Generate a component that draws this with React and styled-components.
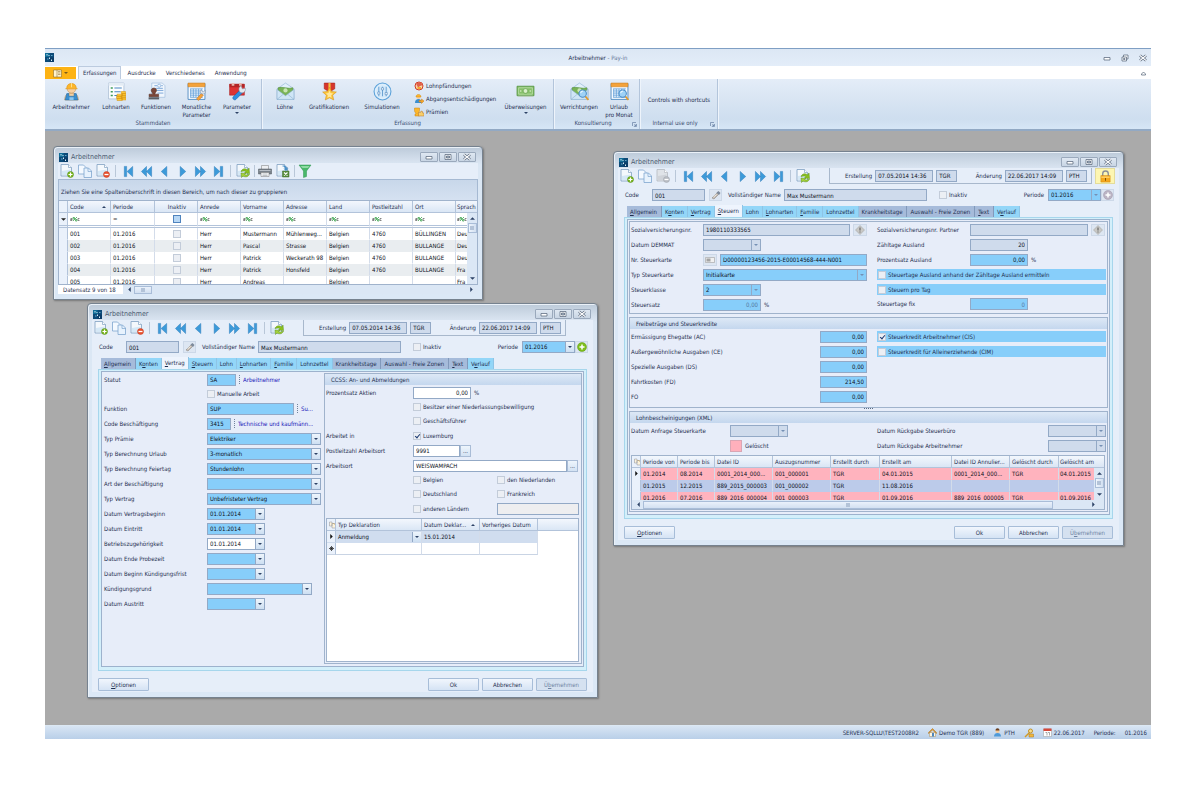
import React, { useId } from "react";
import styled, { createGlobalStyle, css } from "styled-components";

const GlobalStyle = createGlobalStyle`
  * {
    box-sizing: border-box;
  }
  body {
    margin: 0;
    background: #fff;
    color: #1f2f50;
    font: 6px/10px "DejaVu Sans Condensed", "DejaVu Sans", Tahoma, sans-serif;
  }
  button, input, select {
    font: inherit;
    color: inherit;
    margin: 0;
    padding: 0;
  }
  svg {
    display: block;
    flex: none;
  }
`;

// ---------- shell ----------
const Page = styled.div`
  min-height: 100vh;
  padding: 48px 49px 48px 45px;
  display: flex;
`;

const Shell = styled.div`
  flex: 1;
  min-width: 0;
  display: flex;
  flex-direction: column;
  border-top: 1px solid #7f9fc4;
`;

const AppTitle = styled.header`
  display: grid;
  grid-template-columns: 1fr auto 1fr;
  align-items: center;
  height: 17px;
  background: linear-gradient(#dce7f4, #e3edf9);
  span {
    color: #66789a;
  }
`;

const AppTitleButtons = styled.div`
  display: flex;
  justify-content: flex-end;
  gap: 10px;
  padding-right: 4px;
`;

const PlainButton = styled.button`
  border: none;
  background: none;
  display: flex;
  align-items: center;
  justify-content: center;
`;

const RibbonTabs = styled.nav`
  display: flex;
  height: 13px;
  background: #fff;
  align-items: flex-end;
`;

const FileButton = styled(PlainButton)`
  width: 31px;
  height: 12px;
  margin-right: 2px;
  gap: 2px;
  background: #fdb314;
`;

const RibbonTab = styled(PlainButton)`
  height: 12px;
  padding: 0 5px;
  ${(p) =>
    p.$active &&
    css`
      height: 13px;
      padding: 0 4px;
      margin-right: 1px;
      border: 1px solid #bccbdf;
      border-bottom: none;
      background: #e9f0fa;
    `}
`;

const Spacer = styled.span`
  flex: 1;
`;

const RibbonBar = styled.div`
  display: flex;
  height: 52px;
  border-bottom: 2px solid #92a9c4;
  background: linear-gradient(#e4edf8, #d9e5f3 40%, #cedeef 80%, #d6e6f6);
`;

const RibbonGroup = styled.section`
  width: ${(p) => p.$width}px;
  display: flex;
  flex-direction: column;
  border-right: 1px solid #b3c5db;
  box-shadow: 1px 0 0 #eef4fb;
`;

const RibbonItems = styled.div`
  display: flex;
  flex: 1;
  min-height: 0;
  padding: 3px 0 0 1px;
`;

const RibbonCaption = styled.div`
  height: 10px;
  display: flex;
  justify-content: center;
  align-items: center;
  margin-bottom: 1px;
  color: #3a4c70;
  svg {
    margin: 2px 2px 0 auto;
  }
  span {
    margin-left: auto;
  }
`;

const BigButton = styled(PlainButton)`
  width: ${(p) => p.$width}px;
  flex-direction: column;
  justify-content: flex-start;
  line-height: 8px;
  white-space: pre;
  text-align: center;
  span {
    margin-top: 2px;
  }
`;

const SmallList = styled.div`
  display: flex;
  flex-direction: column;
  width: 90px;
  margin-top: -2px;
  button {
    height: 13px;
    justify-content: flex-start;
    gap: 2px;
    padding-left: 1px;
  }
`;

const Desktop = styled.main`
  position: relative;
  flex: 1;
  overflow: hidden;
  background: #aaaaaa;
`;

const StatusBar = styled.footer`
  display: flex;
  height: 14px;
  align-items: center;
  justify-content: flex-end;
  gap: 9px;
  padding-right: 4px;
  border-top: 1px solid #dce8f4;
  background: linear-gradient(#d8e5f4, #b9cfe8);
`;

const StatusItem = styled.span`
  display: flex;
  align-items: center;
  gap: 2px;
`;

// ---------- inner windows ----------
const Frame = styled.section`
  position: absolute;
  left: ${(p) => p.$x}px;
  top: ${(p) => p.$y}px;
  width: ${(p) => p.$width}px;
  padding: 0 4px 5px;
  border: 1px solid #76828f;
  border-radius: 4px 4px 0 0;
  background: linear-gradient(#bccad9, #d6e1ee 14px, #dbe7f4 18px, #dbe8f6);
  box-shadow: 1px 1px 2px #777, inset 1px 1px 0 #eaf1f8;
`;

const TitleRow = styled.header`
  display: flex;
  align-items: center;
  height: 16px;
  padding: 4px 2px 0 1px;
  gap: 3px;
  h2 {
    flex: 1;
    margin: 0;
    font-size: 7px;
    font-weight: normal;
    color: #4b5a70;
  }
`;

const FrameButton = styled(PlainButton)`
  width: 18px;
  height: 10px;
  margin-left: -2px;
  border: 1px solid #9aa9bc;
  border-radius: 1px;
  background: linear-gradient(#dfe8f2, #c8d5e4);
`;

const Client = styled.div`
  background: #e6eef9;
`;

const ToolRow = styled.div`
  display: flex;
  align-items: center;
  height: 16px;
`;

const ToolButton = styled(PlainButton)`
  width: 18px;
  height: 16px;
`;

const ToolSep = styled.i`
  width: ${(p) => (p.$slim ? 4 : 7)}px;
  height: 12px;
  background: linear-gradient(#b9c7d8, #b9c7d8) center / 1px 100% no-repeat;
`;

const StampBox = styled.div`
  display: flex;
  align-items: center;
  width: 263px;
  height: 16px;
  margin-left: 17px;
  padding: 0 4px 0 15px;
  gap: 3px;
  border: solid #a8b8cc;
  border-width: 0 1px 1px;
  label:nth-of-type(2) {
    margin-left: auto;
  }
`;

const LockButton = styled(PlainButton)`
  width: 20px;
  height: 16px;
  margin-left: 3px;
  border: 1px solid #e4dc9a;
  background: #fdf6b2;
`;

const HeadRow = styled.div`
  display: grid;
  grid-template-columns: 27px 53px 4px 13px 6px 56px 143px 12px 1fr auto 66px;
  align-items: center;
  height: 14px;
  margin: 4px 5px 4px 7px;
`;

const PeriodLabel = styled.label`
  padding-right: 4px;
`;

const PeriodBox = styled.div`
  display: flex;
`;

const tones = {
  grey: "#cfdbec",
  blue: "#87cefa",
  white: "#ffffff",
  pale: "#eeeef0",
};

const Field = styled.input`
  display: block;
  flex: none;
  width: ${(p) => (p.$w ? `${p.$w}px` : "100%")};
  min-width: 0;
  height: 12px;
  padding: 0 2px;
  border: 1px solid #93a9c6;
  border-radius: 0;
  outline: none;
  background: ${(p) => tones[p.$tone || "grey"]};
  color: ${(p) => (p.$dim ? "#5578a3" : "#0c111b")};
  text-align: ${(p) => (p.$right ? "right" : "left")};
`;

const ComboBox = styled.span`
  display: flex;
  flex: none;
  width: ${(p) => p.$w}px;
  height: 12px;
  border: 1px solid #93a9c6;
  background: ${(p) => tones[p.$tone]};
  select,
  input {
    flex: 1;
    min-width: 0;
    width: 0;
    height: 10px;
    padding: 0 2px;
    border: none;
    border-radius: 0;
    outline: none;
    appearance: none;
    background: none;
    color: #0c111b;
  }
`;

const Drop = styled(PlainButton)`
  width: 9px;
  height: 10px;
  border-left: 1px solid #93a9c6;
  background: ${(p) => (p.$flat ? "transparent" : "linear-gradient(#eef5fc, #cddff2)")};
`;

const IconButton = styled(PlainButton)`
  width: ${(p) => p.$w || 14}px;
  height: 12px;
  border: 1px solid ${(p) => (p.$soft ? "#ccd8e8" : "#a9bcd6")};
  background: ${(p) => (p.$soft ? "#dde6f2" : "linear-gradient(#eef5fc, #d3e2f3)")};
  line-height: 6px;
`;

const Check = styled.input`
  appearance: none;
  flex: none;
  position: relative;
  width: 8px;
  height: 8px;
  border: 1px solid ${(p) => (p.$strong ? "#4f83bd" : "#c3ccd9")};
  background: ${(p) => (p.$strong ? "#b7d7f5" : "#eceff4")};
  &:checked::after {
    content: "";
    position: absolute;
    left: 2px;
    top: 0;
    width: 2px;
    height: 4px;
    border: solid #1d3c74;
    border-width: 0 1px 1px 0;
    transform: rotate(40deg);
  }
`;

const CheckLabel = styled.label`
  display: flex;
  align-items: center;
  gap: 2px;
  height: 10px;
  white-space: nowrap;
`;

const CheckBar = styled(CheckLabel)`
  width: 229px;
  height: 11px;
  padding-left: 1px;
  background: #87cefa;
`;

const Tabs = styled.nav`
  display: flex;
  height: 11px;
  margin: 0 9px;
`;

const tabTone = { base: "#a6bbda", cyan: "#93d6f8", active: "#eef4fd" };

const Tab = styled(PlainButton)`
  height: ${(p) => (p.$tone === "active" ? 12 : 11)}px;
  margin-top: ${(p) => (p.$tone === "active" ? -1 : 0)}px;
  padding: 0 ${(p) => (p.$tone === "base" ? 4 : 3)}px 0 3px;
  white-space: nowrap;
  background: ${(p) => tabTone[p.$tone]};
  border: solid ${(p) => (p.$tone === "base" ? "#8199bb" : "#8ec4e6")};
  border-width: 0 1px 0 0;
`;

const TabPanel = styled.div`
  margin: 0 6px;
  padding: 1px 2px 3px 2px;
  border: 1px solid #a6d6ec;
  background: #d3effa;
`;

const TabInner = styled.div`
  display: ${(p) => (p.$split ? "grid" : "block")};
  grid-template-columns: 221px 1fr;
  padding: 0 1px 1px;
  border: 1px solid #9db2cd;
  background: #e7edf9;
`;

const FormColumn = styled.div`
  padding-left: 1px;
`;

const Row = styled.div`
  display: flex;
  align-items: center;
  height: ${(p) => (p.$tight ? 14 : 15)}px;
  gap: 3px;
  > label:first-child:not(:only-child),
  > i:first-child {
    flex: none;
    width: ${(p) => p.$label}px;
    margin-right: -3px;
    font-style: normal;
    white-space: nowrap;
  }
`;

const DotsMark = styled.i`
  width: 1px;
  height: 9px;
  border-left: 1px dotted #71839c;
`;

const BlueText = styled.span`
  color: #1414b8;
  white-space: nowrap;
  overflow: hidden;
  text-overflow: ellipsis;
`;

const Group = styled.fieldset`
  min-width: 0;
  margin: 1px 0;
  padding: 0 2px 1px 1px;
  border: 1px solid #a0b3cc;
  background: #e7edf9;
`;

const AllowanceGroup = styled(Group)`
  margin-top: 3px;
  padding-bottom: 3px;
`;

const GroupTitle = styled.h3`
  height: 11px;
  margin: 0 -2px 0 -1px;
  padding-left: 6px;
  font: inherit;
  line-height: 11px;
  background: linear-gradient(#dde8f6, #c4d7ee);
`;

const Pair = styled.div`
  display: grid;
  grid-template-columns: 246px 1fr;
`;

const Splitter = styled.div`
  height: 4px;
  width: 9px;
  margin: -1px auto -2px;
  border-top: 1px dotted #5b6c84;
`;

const Swatch = styled.i`
  width: 12px;
  height: 12px;
  border: 1px solid #d9a6b4;
  background: #ffb0bc;
`;

const Footer = styled.footer`
  display: flex;
  gap: 3px;
  padding: 7px 6px 1px;
  button:first-child {
    margin-right: auto;
  }
`;

const PushButton = styled.button`
  width: 51px;
  height: 13px;
  border: 1px solid #a7bdd8;
  border-radius: 1px;
  background: linear-gradient(#f1f6fd, #d5e3f4);
  &:disabled {
    color: #6f84a4;
    background: #d5e1f0;
  }
`;

const Joined = styled.span`
  display: flex;
`;

const Countries = styled.div`
  display: grid;
  grid-template-columns: 84px 1fr;
  align-items: center;
  flex: 1;
`;

// ---------- grids ----------
const GridBox = styled.div`
  position: relative;
  height: ${(p) => p.$h}px;
  margin-top: ${(p) => (p.$gap ? 2 : 0)}px;
  overflow: hidden;
  background: #fff;
  border: 1px solid #a0b3cc;
`;

const Grid = styled.table`
  table-layout: fixed;
  width: 100%;
  border-collapse: separate;
  border-spacing: 0;
  th,
  td {
    height: 12px;
    padding: 0 0 0 2px;
    line-height: 10px;
    font-weight: normal;
    text-align: left;
    white-space: nowrap;
    overflow: hidden;
    text-overflow: ellipsis;
    border-right: 1px solid #d3dcea;
  }
  td {
    color: #0c111b;
  }
  th {
    border-right-color: #b2c3da;
    border-bottom: 1px solid #b2c3da;
    background: linear-gradient(#f3f7fd, #dae6f5);
  }
  td:first-child,
  th:first-child {
    padding: 0 0 0 2px;
    background: #eaf1fb;
    border-right-color: #b2c3da;
    text-overflow: clip;
  }
  td:last-child,
  th:last-child {
    padding-left: 1px;
    border-right: none;
    text-overflow: clip;
  }
  input {
    display: block;
    margin: 0 auto;
  }
`;

const DeclGrid = styled(Grid)`
  td:last-child {
    background: #fff;
    border-color: transparent;
  }
`;

const HeadCell = styled.span`
  display: flex;
  align-items: center;
  gap: 2px;
  b {
    flex: 1;
    font-weight: normal;
    overflow: hidden;
    text-overflow: ellipsis;
    text-align: ${(p) => (p.$center ? "center" : "left")};
  }
  svg {
    margin-right: 4px;
  }
`;

const CellCombo = styled.span`
  display: flex;
  align-items: center;
  justify-content: space-between;
`;

const FilterRow = styled.tr`
  td {
    height: 15px;
    border-bottom: 3px double #b2c3da;
    color: #444;
  }
`;

const BodyRow = styled.tr`
  td {
    background: ${(p) => p.$bg || "#fff"};
    border-bottom: 1px solid ${(p) => p.$line || "transparent"};
  }
`;

const GroupHint = styled.div`
  height: 21px;
  padding: 7px 2px 0;
  border: 1px solid #a5b9d2;
  border-bottom: none;
  background: linear-gradient(#c8d7ea, #d5e1f1);
`;

const VScroll = styled.div`
  position: absolute;
  right: 0;
  top: ${(p) => p.$top}px;
  bottom: ${(p) => p.$bottom}px;
  width: 10px;
  display: flex;
  flex-direction: column;
  align-items: center;
  justify-content: space-between;
  padding: 3px 0;
  background: #dbe7f5;
`;

const VThumb = styled.i`
  display: flex;
  align-items: center;
  justify-content: center;
  width: 9px;
  height: 10px;
  margin-top: 2px;
  margin-bottom: auto;
  border: 1px solid #a9bdd8;
  background: linear-gradient(90deg, #eef4fc, #d2e0f1);
  &::after {
    content: "";
    width: 4px;
    height: 4px;
    background: #b3c3d8;
  }
`;

const HScroll = styled.div`
  display: flex;
  align-items: center;
  height: 9px;
  flex: 1;
  padding: 0 4px;
  gap: 2px;
  background: #dbe7f5;
`;

const HThumb = styled(VThumb)`
  width: ${(p) => p.$w}px;
  height: 8px;
  margin: 0 auto 0 0;
  background: linear-gradient(#eaf1fb, #d2e0f1);
`;

const Navigator = styled.div`
  display: flex;
  height: 9px;
  span {
    width: 65px;
    padding-left: 5px;
    line-height: 9px;
    background: #fff;
    white-space: nowrap;
  }
`;

const CertFoot = styled.div`
  position: absolute;
  left: 0;
  right: 0;
  bottom: 0;
  display: flex;
`;

// ---------- drawings ----------
const Svg = ({ w = 14, h, box = 28, children }) => (
  <svg width={w} height={h || w} viewBox={`0 0 ${box} ${box}`} aria-hidden="true">
    {children}
  </svg>
);

const Caret = ({ dir = "down", color = "#2d4266", size = 4 }) => {
  const d = { down: "M0 2h8L4 6z", up: "M0 6h8L4 2z", left: "M6 0v8L2 4z", right: "M2 0v8l4-4z" }[dir];
  return (
    <Svg w={size} box={8}>
      <path d={d} fill={color} />
    </Svg>
  );
};

const Logo = () => (
  <Svg w={9} box={18}>
    <path d="M0 0h18v18H0z" fill="#0c4a78" />
    <path d="M0 0h9v8H0z" fill="#0f6c96" />
    <path d="M9 9h9v9H9z" fill="#0a3c68" />
    <path d="M3 2h2v3H3zM7 4h2v2H7zM8 9h2v3H8zM12 13h2v3h-2z" fill="#d3edf7" />
    <path d="M12 4h3v2h-3zM4 11h3v2H4z" fill="#5fa7c8" />
  </Svg>
);

const Sheet = ({ grey }) => (
  <g>
    <path
      d="M2 1h15l6 6v17H2z"
      fill={grey ? "#dfe3e8" : "#f4f8fc"}
      stroke={grey ? "#b4b9c0" : "#7fa0c2"}
      strokeWidth="1.6"
    />
    <path d="M17 1v6h6" fill="#fff" stroke={grey ? "#b4b9c0" : "#7fa0c2"} strokeWidth="1.4" />
    <path d="M4 14l17-3v11H4z" fill={grey ? "#cfd3d9" : "#d5e8f6"} />
  </g>
);

const NewIcon = () => (
  <Svg>
    <Sheet />
    <circle cx="21" cy="21" r="6" fill="#7ab51d" stroke="#4f8a14" />
    <path d="M21 17v8M17 21h8" stroke="#fff" strokeWidth="2.4" />
  </Svg>
);

const CopyIcon = () => (
  <Svg>
    <path d="M1 2h10l5 5v13H1z" fill="#f4f9ff" stroke="#7fa6cf" strokeWidth="1.6" />
    <path d="M12 8h9l6 6v13H12z" fill="#e7f2fd" stroke="#7fa6cf" strokeWidth="1.6" />
    <path d="M20 8v7h7" fill="none" stroke="#7fa6cf" strokeWidth="1.4" />
  </Svg>
);

const DeleteIcon = ({ grey }) => (
  <Svg>
    <Sheet grey={grey} />
    <circle cx="21" cy="21" r="6" fill={grey ? "#b9bdc4" : "#e8502e"} stroke={grey ? "#9fa4ac" : "#c5391b"} />
    <path d="M17 21h8" stroke="#fff" strokeWidth="2.6" />
  </Svg>
);

const NavIcon = ({ kind }) => {
  const shapes = {
    first: "M5 3h5v22H5zM23 3v22L11 14z",
    rewind: "M14 3v22L3 14zM25 3v22L14 14z",
    prev: "M19 3v22L7 14z",
    next: "M9 3v22l12-11z",
    forward: "M3 3v22l11-11zM14 3v22l11-11z",
    last: "M5 3v22l12-11zM18 3h5v22h-5z",
  };
  return (
    <Svg w={13}>
      <path d={shapes[kind]} fill="#3c9ad9" stroke="#2a78b8" strokeWidth="1" />
    </Svg>
  );
};

const RefreshIcon = () => (
  <Svg>
    <Sheet />
    <path d="M10 15c2-6 9-7 13-3l3-4 1 11-10-1 3-3c-3-2-6-1-10 0z" fill="#8cc21f" stroke="#5c9216" />
    <path d="M27 20c-2 6-9 7-13 4l-3 3-1-9 10 1-3 2c3 2 6 1 10-1z" fill="#a5d238" stroke="#5c9216" />
  </Svg>
);

const PrintIcon = () => (
  <Svg>
    <path d="M7 3h14v8H7z" fill="#eef0f3" stroke="#777" />
    <path d="M1 10h26v10H1z" fill="#7b838c" stroke="#4d545b" />
    <path d="M3 12h22v2H3z" fill="#b8bec5" />
    <path d="M6 17h16v8H6z" fill="#f6f7f9" stroke="#777" />
    <path d="M9 20h10M9 23h10" stroke="#8a9097" />
  </Svg>
);

const ExportIcon = () => (
  <Svg>
    <Sheet />
    <path d="M13 14h13v12H13z" fill="#5a8f3d" stroke="#3f6b28" />
    <path d="M16 17l7 6M23 17l-7 6" stroke="#fff" strokeWidth="2.2" />
    <path d="M13 3c6-1 9 2 9 6h3l-5 5-5-5h3c0-3-2-4-5-4z" fill="#4a90c8" />
  </Svg>
);

const FunnelIcon = () => (
  <Svg>
    <path d="M2 2h24L17 14v11l-6 2V14z" fill="#49b86a" stroke="#2f9450" />
    <path d="M5 4h18l-3 4H9z" fill="#8fdba4" />
  </Svg>
);

const WandIcon = () => (
  <Svg w={10} box={20}>
    <path d="M2 16L12 6l3 3-9 9z" fill="#c4bbb2" stroke="#827c78" />
    <path d="M11 5l5 5 3-4-4-4z" fill="#7d8a9b" />
    <path d="M5 14l6-5" stroke="#f4efe6" strokeWidth="2" />
  </Svg>
);

const AddIcon = ({ grey }) => (
  <Svg w={10} box={20}>
    <circle cx="10" cy="10" r="9" fill={grey ? "#bbb4c4" : "#7fbf1e"} stroke={grey ? "#9f99ab" : "#5d9a12"} />
    <path d="M10 5v10M5 10h10" stroke="#fff" strokeWidth="3" />
  </Svg>
);

const LockIcon = () => (
  <Svg w={13}>
    <path d="M8 13V8c0-8 12-8 12 0v5" fill="none" stroke="#8b8f98" strokeWidth="3" />
    <path d="M4 12h20v14H4z" fill="#f5a81c" stroke="#c97f0c" />
    <path d="M5 14h18v3H5z" fill="#ffd36a" />
    <path d="M13 17h2v6h-2z" fill="#7a4d05" />
  </Svg>
);

const AlertIcon = () => (
  <Svg w={10} box={20}>
    <path d="M10 1l9 9-9 9-9-9z" fill="#c9c9c6" stroke="#9a9a98" />
    <path d="M9 5h2v6H9zM9 13h2v2H9z" fill="#555" />
  </Svg>
);

const CardIcon = () => (
  <Svg w={10} box={20}>
    <path d="M1 5h18v10H1z" fill="#f0f0f0" stroke="#909090" />
    <path d="M3 7h8v6H3z" fill="#a3a3a3" />
  </Svg>
);

const CornerIcon = () => (
  <Svg w={8} box={16}>
    <path d="M1 2h5v8H1zM6 5h8v9H6z" fill="#fdf3dc" stroke="#8a8f99" />
    <path d="M7 5h3l1 2h4" fill="none" stroke="#c9a054" />
  </Svg>
);

const Contains = () => (
  <Svg w={10} box={20}>
    <path d="M1 9h3v4H1v-2h3M19 9h-3v4h3" stroke="#666" fill="none" strokeWidth="1.5" />
    <path d="M6 14l8-8M6 7h3v3H6zM11 11h3v3h-3z" stroke="#37a04a" strokeWidth="1.5" fill="none" />
  </Svg>
);

const LauncherIcon = () => (
  <Svg w={5} box={10}>
    <path d="M1 8V1h7" fill="none" stroke="#6f86a8" strokeWidth="1.5" />
    <path d="M4 4l4 4M9 4v5H4z" stroke="#6f86a8" fill="#6f86a8" />
  </Svg>
);

const MinGlyph = () => (
  <Svg w={8} box={16}>
    <path d="M2 7h12v5H2z" fill="#fff" stroke="#5a687c" strokeWidth="1.5" />
  </Svg>
);

const MaxGlyph = () => (
  <Svg w={8} box={16}>
    <path d="M2 3h12v10H2z" fill="#fff" stroke="#5a687c" strokeWidth="1.5" />
    <path d="M5 6h6v4H5z" fill="#aab6c6" stroke="#5a687c" strokeWidth="1.5" />
  </Svg>
);

const RestoreGlyph = () => (
  <Svg w={8} box={16}>
    <path d="M5 2h9v8H5z" fill="#fff" stroke="#5a687c" strokeWidth="1.5" />
    <path d="M2 6h9v8H2z" fill="#fff" stroke="#5a687c" strokeWidth="1.5" />
    <path d="M5 9h3v2H5z" fill="none" stroke="#5a687c" strokeWidth="1.5" />
  </Svg>
);

const CloseGlyph = () => (
  <Svg w={8} box={16}>
    <path d="M2 3l12 10M14 3L2 13" stroke="#5a687c" strokeWidth="5" />
    <path d="M2 3l12 10M14 3L2 13" stroke="#fff" strokeWidth="2.2" />
  </Svg>
);

const WorkerIcon = () => (
  <Svg w={19} box={36}>
    <path d="M5 34c0-9 5-13 13-13s13 4 13 13z" fill="#f3cfa0" stroke="#b98a55" />
    <path d="M9 22h4v5h10v-5h4l3 12H6z" fill="#3a8fd0" stroke="#2169a5" />
    <circle cx="18" cy="13" r="8" fill="#f7cfa0" stroke="#c08b50" />
    <path d="M9 11C9 0 27 0 27 11l2 2H7z" fill="#fdb62a" stroke="#d98c0c" />
    <path d="M17 2h2v8h-2z" fill="#ffe08a" />
    <path d="M14 29h8v5h-8z" fill="#8fc8f0" />
  </Svg>
);

const ListIcon = () => (
  <Svg w={19} box={36}>
    <path d="M3 2h29v30H3z" fill="#fbfdff" stroke="#8aa4c0" />
    <path d="M3 2h29v5H3z" fill="#e4ecf5" />
    <path d="M7 10h4v3H7zM7 17h4v3H7zM7 24h4v3H7z" fill="#3e9a5a" />
    <path d="M14 11.500h14M14 18.500h12M14 25.500h6" stroke="#4b87c4" strokeWidth="2" />
    <path d="M19 23h10v4H19zM18 27h10v4H18zM19 31h10v4H19zM27 18h8v4h-8zM28 22h8v4h-8zM27 26h8v4h-8zM28 30h8v4h-8z" fill="#fdc93a" stroke="#d5920e" />
  </Svg>
);

const StampIcon = () => (
  <Svg w={19} box={36}>
    <path d="M9 2h20l5 5v22H9z" fill="#f0f6fd" stroke="#8db0d6" />
    <path d="M14 7h5M27 7h3M16 12h14M18 16h13M20 21h11" stroke="#7aa7d8" strokeWidth="1.8" />
    <circle cx="23" cy="7" r="3" fill="none" stroke="#5f95cf" />
    <path d="M8 16c0-6 10-6 10 0 0 3-3 4-3 7h7v5H4v-5h7c0-3-3-4-3-7z" fill="#7a4638" stroke="#52291f" />
    <path d="M3 29h20v4H3z" fill="#5a5f66" />
  </Svg>
);

const CalendarArt = () => (
  <g>
    <path d="M2 3h32v30H2z" fill="#f4f9ff" stroke="#3c7cb8" strokeWidth="1.5" />
    <path d="M2 2h32v7H2z" fill="#f4a23a" stroke="#cf7d14" />
    <path
      d="M6 13h24M6 17h24M6 21h24M6 25h24M6 29h24M7 13v16M12 13v16M17 13v16M22 13v16M27 13v16"
      stroke="#5b9bd5"
      strokeWidth="1.4"
    />
  </g>
);

const MonthlyIcon = () => (
  <Svg w={19} box={36}>
    <CalendarArt />
    <path d="M18 32l9-10 4 3-9 10z" fill="#f5a33a" stroke="#c9741a" />
    <path d="M27 15l3 4 5-3c1 6-4 8-8 6-3-3-2-6 0-7z" fill="#dfe5ec" stroke="#7e8da0" />
  </Svg>
);

const ToolsIcon = () => (
  <Svg w={19} box={36}>
    <path d="M3 4h28v21H3z" fill="#dd3434" stroke="#a31c1c" />
    <path d="M3 4h28v6H3z" fill="#b32626" />
    <path d="M7 2h5v5H7zM21 2h5v5h-5z" fill="#e9b9b0" />
    <path d="M10 28L23 15l5 5-13 13c-3 3-8-2-5-5z" fill="#2f8fe0" stroke="#1a63a8" />
    <path d="M25 7l2 6 6-1c1 6-4 10-9 8-5-4-4-11 1-13z" fill="#e4e8ee" stroke="#7e8da0" />
  </Svg>
);

const EnvelopeArt = () => (
  <g>
    <path d="M2 13L18 2l16 11v20H2z" fill="#e2f0fb" stroke="#84a9cb" />
    <path d="M4 11c9-3 19 3 28 0v10L18 27 4 21z" fill="#79b356" stroke="#4d8a34" />
    <circle cx="18" cy="16" r="4" fill="#c9e5b5" />
    <path d="M2 14l16 12 16-12v19H2z" fill="#cfe5f6" stroke="#84a9cb" />
    <path d="M2 33l12-10M34 33L22 23" stroke="#84a9cb" />
  </g>
);

const WagesIcon = () => (
  <Svg w={19} box={36}>
    <EnvelopeArt />
  </Svg>
);

const LensArt = () => (
  <g>
    <path d="M29 27l6 7" stroke="#e39a2c" strokeWidth="3.5" />
    <circle cx="24" cy="22" r="7" fill="#9fd2f6" stroke="#4a8dc8" strokeWidth="2" />
    <path d="M20 21c1-3 3-4 5-4" stroke="#e9f6ff" strokeWidth="2" fill="none" />
  </g>
);

const PostingsIcon = () => (
  <Svg w={19} box={36}>
    <EnvelopeArt />
    <LensArt />
  </Svg>
);

const LeaveIcon = () => (
  <Svg w={19} box={36}>
    <CalendarArt />
    <LensArt />
  </Svg>
);

const MedalIcon = () => (
  <Svg w={19} box={36}>
    <path d="M8 2h20v11l-10 6-10-6z" fill="#d7362c" stroke="#9f1d16" />
    <path d="M16 2h4v14h-4z" fill="#f3c545" />
    <path d="M18 10l4 8 9 1-7 6 2 9-8-4-8 4 2-9-7-6 9-1z" fill="#fdc63a" stroke="#d48d12" />
    <path d="M18 16l2 5 5 1-4 3 1 5-4-2-4 2 1-5-4-3 5-1z" fill="#ffe79a" />
  </Svg>
);

const SlidersIcon = () => (
  <Svg w={19} box={36}>
    <circle cx="18" cy="18" r="16" fill="#d3e9fa" stroke="#5aa0d8" strokeWidth="2" />
    <circle cx="18" cy="18" r="13" fill="none" stroke="#f3faff" />
    <path d="M11 9v18M18 9v18M25 9v18" stroke="#4f8fc8" strokeWidth="1.5" />
    <path d="M9 19h4v4H9zM16 11h4v4h-4zM23 20h4v4h-4z" fill="#fff" stroke="#3b78b4" />
  </Svg>
);

const MoneyIcon = () => (
  <Svg w={19} box={36}>
    <path d="M2 8h32v18H2z" fill="#86c06a" stroke="#4f8f3a" strokeWidth="1.5" />
    <path d="M5 11h26v12H5z" fill="none" stroke="#d9efcb" />
    <circle cx="18" cy="17" r="4.5" fill="#d9efcb" stroke="#4f8f3a" />
    <circle cx="9" cy="17" r="1.5" fill="#d9efcb" />
    <circle cx="27" cy="17" r="1.5" fill="#d9efcb" />
    <path d="M4 26h28v2H4z" fill="#b9ccb2" />
  </Svg>
);

const SeizeIcon = () => (
  <Svg w={10} box={20}>
    <circle cx="10" cy="10" r="8" fill="#fbd7a5" stroke="#cf3a26" strokeWidth="2" />
    <path d="M4 5l8-3 6 6-6 2-4 3z" fill="#e0604c" />
    <path d="M7 12h7v4H7z" fill="#f6a72c" />
  </Svg>
);

const LeaveWorkIcon = () => (
  <Svg w={10} box={20}>
    <circle cx="9" cy="6" r="4" fill="#f7cfa0" />
    <path d="M4 6c0-7 10-7 10 0z" fill="#fdb62a" stroke="#d08a12" />
    <path d="M2 18c0-6 3-8 7-8s6 2 6 8z" fill="#3a8fd0" />
    <path d="M10 13h5v-3l5 4-5 5v-3h-5z" fill="#f6a72c" stroke="#c97d10" />
  </Svg>
);

const BonusIcon = () => (
  <Svg w={10} box={20}>
    <path d="M1 2h10v5c0 4-3 4-3 7h3v4H2v-4h2C4 11 1 11 1 7z" fill="#fbb72c" stroke="#c9820f" />
    <path d="M9 11h4l1-3 3 1v3h3v6H9z" fill="#f8cf6a" stroke="#b9742a" />
  </Svg>
);

const HouseIcon = () => (
  <Svg w={9} box={18}>
    <path d="M3 9h12v8H3z" fill="#fff6e0" stroke="#a58b5a" />
    <path d="M1 9l8-8 8 8v2L9 4l-8 7z" fill="#e8a33a" stroke="#a56c1a" />
    <path d="M8 10h4v7H8z" fill="#4d86c0" />
  </Svg>
);

const UserIcon = () => (
  <Svg w={9} box={18}>
    <path d="M2 17c0-5 3-7 7-7s7 2 7 7z" fill="#4f9ad8" />
    <circle cx="9" cy="6" r="4" fill="#f4c793" />
    <path d="M5 5c0-6 8-6 8 0z" fill="#6b3f1e" />
  </Svg>
);

const KeyIcon = () => (
  <Svg w={10} box={20}>
    <path d="M2 18L12 8" stroke="#d29a24" strokeWidth="3" />
    <circle cx="13" cy="6" r="4" fill="#f7dc8a" stroke="#c0902a" strokeWidth="2" />
    <path d="M10 12h9v6h-9z" fill="#f2b63c" stroke="#a8781a" />
  </Svg>
);

const DayIcon = () => (
  <Svg w={9} box={18}>
    <path d="M1 2h16v15H1z" fill="#fff" stroke="#999" />
    <path d="M1 1h16v5H1z" fill="#d4483a" />
    <path d="M5 9h3v6M10 9h3v6" stroke="#555" fill="none" />
  </Svg>
);

const MenuIcon = () => (
  <Svg w={9} box={18}>
    <path d="M1 2h16v14H1z" fill="#fff3cf" stroke="#7a5b1a" />
    <path d="M8 2v14M10 5h5M10 8h5M10 11h5" stroke="#7a5b1a" />
  </Svg>
);

const NewRowIcon = () => (
  <Svg w={5} box={10}>
    <path d="M5 0v10M0 5h10M2 2l6 6M8 2L2 8" stroke="#222" strokeWidth="1.5" />
  </Svg>
);

// ---------- small helpers ----------
// "&" marks the shortcut letter, e.g. "K&onten"
const Hot = ({ text }) => {
  const i = text.indexOf("&");
  if (i < 0) return <span>{text}</span>;
  return (
    <span>
      {text.slice(0, i)}
      <u>{text[i + 1]}</u>
      {text.slice(i + 2)}
    </span>
  );
};

const Dropdown = ({ id, w, tone = "blue", value = "", flat }) => (
  <ComboBox $w={w} $tone={tone}>
    <select id={id} defaultValue={value}>
      <option>{value}</option>
    </select>
    <Drop as="span" $flat={flat}>
      <Caret color={flat ? "#7590b4" : undefined} />
    </Drop>
  </ComboBox>
);

const DateField = ({ id, w = 58, tone = "blue", value = "", flat }) => (
  <ComboBox $w={w} $tone={tone}>
    <input id={id} defaultValue={value} />
    <Drop $flat={flat} aria-label="Kalender">
      <Caret color={flat ? "#7590b4" : undefined} />
    </Drop>
  </ComboBox>
);

const FormRow = ({ label, width, tight, children }) => {
  const id = useId();
  return (
    <Row $label={width} $tight={tight}>
      <label htmlFor={id}>{label}</label>
      {children(id)}
    </Row>
  );
};

const Tick = ({ label, as: Box = CheckLabel, checked }) => (
  <Box>
    <Check type="checkbox" defaultChecked={checked} />
    {label}
  </Box>
);

const TickBar = (props) => <Tick as={CheckBar} {...props} />;

const MdiWindow = ({ x, y, width, children }) => (
  <Frame $x={x} $y={y} $width={width}>
    <TitleRow>
      <Logo />
      <h2>Arbeitnehmer</h2>
      <FrameButton aria-label="Minimieren">
        <MinGlyph />
      </FrameButton>
      <FrameButton aria-label="Maximieren">
        <MaxGlyph />
      </FrameButton>
      <FrameButton aria-label="Schließen">
        <CloseGlyph />
      </FrameButton>
    </TitleRow>
    <Client>{children}</Client>
  </Frame>
);

const navKinds = ["first", "rewind", "prev", "next", "forward", "last"];

const RecordTools = ({ locked }) => (
  <>
    <ToolButton aria-label="Neu">
      <NewIcon />
    </ToolButton>
    <ToolButton aria-label="Kopieren">
      <CopyIcon />
    </ToolButton>
    <ToolButton aria-label="Löschen">
      <DeleteIcon grey={locked} />
    </ToolButton>
    <ToolSep />
    {navKinds.map((kind) => (
      <ToolButton key={kind} aria-label={kind}>
        <NavIcon kind={kind} />
      </ToolButton>
    ))}
    <ToolSep />
    <ToolButton aria-label="Aktualisieren">
      <RefreshIcon />
    </ToolButton>
  </>
);

const tabNames = [
  ["&Allgemein", "base"],
  ["K&onten", "cyan"],
  ["&Vertrag", "cyan"],
  ["&Steuern", "cyan"],
  ["Lohn", "cyan"],
  ["&Lohnarten", "cyan"],
  ["&Familie", "cyan"],
  ["Lohnzettel", "cyan"],
  ["Krankheitstage", "base"],
  ["Auswahl - Freie Zonen", "base"],
  ["&Text", "base"],
  ["V&erlauf", "cyan"],
];

// shared frame of both detail windows
const EmployeeForm = ({ active, locked, children }) => {
  const id = useId();
  return (
    <>
      <ToolRow>
        <RecordTools locked={locked} />
        <StampBox>
          <label htmlFor={`${id}c`}>Erstellung</label>
          <Field id={`${id}c`} $w={58} defaultValue="07.05.2014 14:36" />
          <Field $w={21} defaultValue="TGR" aria-label="Erstellt durch" />
          <label htmlFor={`${id}m`}>Änderung</label>
          <Field id={`${id}m`} $w={58} defaultValue="22.06.2017 14:09" />
          <Field $w={21} defaultValue="PTH" aria-label="Geändert durch" />
        </StampBox>
        {locked && (
          <LockButton aria-label="Gesperrt">
            <LockIcon />
          </LockButton>
        )}
      </ToolRow>
      <HeadRow>
        <label htmlFor={`${id}n`}>Code</label>
        <Field id={`${id}n`} defaultValue="001" />
        <i />
        <IconButton $w={13} $soft aria-label="Suchen">
          <WandIcon />
        </IconButton>
        <i />
        <label htmlFor={`${id}v`}>Vollständiger Name</label>
        <Field id={`${id}v`} defaultValue="Max Mustermann" />
        <i />
        <Tick label="Inaktiv" />
        <PeriodLabel htmlFor={`${id}p`}>Periode</PeriodLabel>
        <PeriodBox>
          <Dropdown id={`${id}p`} w={53} value="01.2016" flat={locked} />
          <IconButton $w={13} $soft aria-label="Periode hinzufügen">
            <AddIcon grey={locked} />
          </IconButton>
        </PeriodBox>
      </HeadRow>
      <Tabs>
        {tabNames.map(([name, tone]) => (
          <Tab key={name} $tone={name === active ? "active" : tone}>
            <Hot text={name} />
          </Tab>
        ))}
      </Tabs>
      <TabPanel>{children}</TabPanel>
      <Footer>
        <PushButton>
          <Hot text="&Optionen" />
        </PushButton>
        <PushButton>Ok</PushButton>
        <PushButton>Abbrechen</PushButton>
        <PushButton disabled>
          <Hot text="Ü&bernehmen" />
        </PushButton>
      </Footer>
    </>
  );
};

// ---------- employee list ----------
const people = [
  ["001", "Herr", "Mustermann", "Mühlenweg...", "Belgien", "4760", "BÜLLINGEN", "Deu"],
  ["002", "Herr", "Pascal", "Strasse", "Belgien", "4760", "BULLANGE", "Deu"],
  ["003", "Herr", "Patrick", "Weckerath 98", "Belgien", "4760", "BULLANGE", "Deu"],
  ["004", "Herr", "Patrick", "Honsfeld", "Belgien", "4760", "BULLANGE", "Fra"],
  ["005", "Herr", "Andreas", "", "Belgien", "", "", "Fra"],
];

const listHeads = ["Anrede", "Vorname", "Adresse", "Land", "Postleitzahl", "Ort", "Sprach"];

const EmployeeList = () => (
  <MdiWindow x={8} y={15} width={430}>
    <ToolRow>
      <RecordTools />
      <ToolSep $slim />
      <ToolButton aria-label="Drucken">
        <PrintIcon />
      </ToolButton>
      <ToolButton aria-label="Exportieren">
        <ExportIcon />
      </ToolButton>
      <ToolSep $slim />
      <ToolButton aria-label="Filtern">
        <FunnelIcon />
      </ToolButton>
    </ToolRow>
    <GroupHint>Ziehen Sie eine Spaltenüberschrift in diesen Bereich, um nach dieser zu gruppieren</GroupHint>
    <GridBox $h={85}>
      <Grid>
        <colgroup>
          <col width="9" />
          {[43, 44, 43, 43, 43, 43, 43, 43, 43].map((w, i) => (
            <col key={i} width={w} />
          ))}
          <col />
        </colgroup>
        <thead>
          <tr>
            <th />
            <th>
              <HeadCell>
                <b>Code</b>
                <Caret dir="up" />
              </HeadCell>
            </th>
            <th>Periode</th>
            <th>
              <HeadCell $center>
                <b>Inaktiv</b>
              </HeadCell>
            </th>
            {listHeads.map((h) => (
              <th key={h}>{h}</th>
            ))}
          </tr>
        </thead>
        <tbody>
          <FilterRow>
            <td>
              <Caret size={5} color="#222" />
            </td>
            <td>
              <Contains />
            </td>
            <td>=</td>
            <td>
              <Check type="checkbox" $strong aria-label="Filter Inaktiv" />
            </td>
            {listHeads.map((h) => (
              <td key={h}>
                <Contains />
              </td>
            ))}
          </FilterRow>
          {people.map(([code, ...rest], i) => (
            <BodyRow key={code} $bg={i % 2 ? "#e9edf0" : "#fff"}>
              <td />
              <td>{code}</td>
              <td>01.2016</td>
              <td>
                <Check type="checkbox" aria-label={`Inaktiv ${code}`} />
              </td>
              {rest.map((cell, c) => (
                <td key={c}>{cell}</td>
              ))}
            </BodyRow>
          ))}
        </tbody>
      </Grid>
      <VScroll $top={12} $bottom={0}>
        <Caret dir="up" size={5} />
        <VThumb />
        <Caret size={5} />
      </VScroll>
    </GridBox>
    <Navigator>
      <span>Datensatz 9 von 18</span>
      <HScroll>
        <Caret dir="left" size={5} />
        <HThumb $w={18} />
        <Caret dir="right" size={5} />
      </HScroll>
    </Navigator>
  </MdiWindow>
);

// ---------- contract ----------
const contractLists = [
  ["Typ Prämie", "Elektriker"],
  ["Typ Berechnung Urlaub", "3-monatlich"],
  ["Typ Berechnung Feiertag", "Stundenlohn"],
  ["Art der Beschäftigung", ""],
  ["Typ Vertrag", "Unbefristeter Vertrag"],
];

const contractDates = [
  ["Datum Vertragsbeginn", "01.01.2014", "blue"],
  ["Datum Eintritt", "01.01.2014", "blue"],
  ["Betriebszugehörigkeit", "01.01.2014", "white"],
  ["Datum Ende Probezeit", "", "blue"],
  ["Datum Beginn Kündigungsfrist", "", "blue"],
];

const ContractWindow = () => (
  <MdiWindow x={42} y={172} width={511}>
    <EmployeeForm active="&Vertrag">
      <TabInner $split>
        <FormColumn>
          <FormRow label="Statut" width={103}>
            {(id) => (
              <>
                <Field id={id} $w={29} $tone="blue" defaultValue="SA" />
                <DotsMark />
                <BlueText>Arbeitnehmer</BlueText>
              </>
            )}
          </FormRow>
          <Row $label={103} $tight>
            <i />
            <Tick label="Manuelle Arbeit" />
          </Row>
          <FormRow label="Funktion" width={103}>
            {(id) => (
              <>
                <Field id={id} $w={87} $tone="blue" defaultValue="SUP" />
                <DotsMark />
                <BlueText>Su...</BlueText>
              </>
            )}
          </FormRow>
          <FormRow label="Code Beschäftigung" width={103}>
            {(id) => (
              <>
                <Field id={id} $w={24} $tone="blue" defaultValue="3415" />
                <DotsMark />
                <BlueText>Technische und kaufmänn...</BlueText>
              </>
            )}
          </FormRow>
          {contractLists.map(([label, value]) => (
            <FormRow key={label} label={label} width={103}>
              {(id) => <Dropdown id={id} w={114} value={value} />}
            </FormRow>
          ))}
          {contractDates.map(([label, value, tone]) => (
            <FormRow key={label} label={label} width={103}>
              {(id) => <DateField id={id} value={value} tone={tone} />}
            </FormRow>
          ))}
          <FormRow label="Kündigungsgrund" width={103}>
            {(id) => <Dropdown id={id} w={105} />}
          </FormRow>
          <FormRow label="Datum Austritt" width={103}>
            {(id) => <DateField id={id} />}
          </FormRow>
        </FormColumn>
        <Group>
          <GroupTitle>CCSS: An- und Abmeldungen</GroupTitle>
          <FormRow label="Prozentsatz Aktien" width={87}>
            {(id) => (
              <>
                <Field id={id} $w={58} $tone="white" $right defaultValue="0,00" />
                <span>%</span>
              </>
            )}
          </FormRow>
          <Row $label={87} $tight>
            <i />
            <Tick label="Besitzer einer Niederlassungsbewilligung" />
          </Row>
          <Row $label={87} $tight>
            <i />
            <Tick label="Geschäftsführer" />
          </Row>
          <Row $label={87}>
            <i>Arbeitet in</i>
            <Tick label="Luxemburg" checked />
          </Row>
          <FormRow label="Postleitzahl Arbeitsort" width={87}>
            {(id) => (
              <Joined>
                <Field id={id} $w={47} $tone="white" defaultValue="9991" />
                <IconButton $w={11}>...</IconButton>
              </Joined>
            )}
          </FormRow>
          <FormRow label="Arbeitsort" width={87}>
            {(id) => (
              <Joined>
                <Field id={id} $w={154} $tone="white" defaultValue="WEISWAMPACH" />
                <IconButton $w={11}>...</IconButton>
              </Joined>
            )}
          </FormRow>
          <Row $label={87} $tight>
            <i />
            <Countries>
              <Tick label="Belgien" />
              <Tick label="den Niederlanden" />
            </Countries>
          </Row>
          <Row $label={87} $tight>
            <i />
            <Countries>
              <Tick label="Deutschland" />
              <Tick label="Frankreich" />
            </Countries>
          </Row>
          <Row $label={87}>
            <i />
            <Countries>
              <Tick label="anderen Ländern" />
              <Field $tone="pale" aria-label="Andere Länder" />
            </Countries>
          </Row>
          <GridBox $h={144} $gap>
            <DeclGrid>
              <colgroup>
                <col width="9" />
                <col width="86" />
                <col width="58" />
                <col width="58" />
                <col />
              </colgroup>
              <thead>
                <tr>
                  <th>
                    <CornerIcon />
                  </th>
                  <th>Typ Deklaration</th>
                  <th>
                    <HeadCell>
                      <b>Datum Deklar...</b>
                      <Caret dir="up" />
                    </HeadCell>
                  </th>
                  <th>Vorheriges Datum</th>
                  <th />
                </tr>
              </thead>
              <tbody>
                <BodyRow $bg="#d0ddef" $line="#d0ddef">
                  <td>
                    <Caret dir="right" color="#111" size={5} />
                  </td>
                  <td>
                    <CellCombo>
                      Anmeldung
                      <Drop aria-label="Typ wählen">
                        <Caret />
                      </Drop>
                    </CellCombo>
                  </td>
                  <td>15.01.2014</td>
                  <td />
                  <td />
                </BodyRow>
                <BodyRow $line="#c9d4e4">
                  <td>
                    <NewRowIcon />
                  </td>
                  <td />
                  <td />
                  <td />
                  <td />
                </BodyRow>
              </tbody>
            </DeclGrid>
          </GridBox>
        </Group>
      </TabInner>
    </EmployeeForm>
  </MdiWindow>
);

// ---------- taxes ----------
const allowances = [
  ["Ermässigung Ehegatte (AC)", "0,00"],
  ["Außergewöhnliche Ausgaben (CE)", "0,00"],
  ["Spezielle Ausgaben (DS)", "0,00"],
  ["Fahrtkosten (FD)", "214,50"],
  ["FO", "0,00"],
];

const certHeads = [
  "Periode von",
  "Periode bis",
  "Datei ID",
  "Auszugsnummer",
  "Erstellt durch",
  "Erstellt am",
  "Datei ID Annulier...",
  "Gelöscht durch",
  "Gelöscht am",
];

const certs = [
  ["01.2014", "08.2014", "0001_2014_000...", "001_000001", "TGR", "04.01.2015", "0001_2014_000...", "TGR", "04.01.2015"],
  ["01.2015", "12.2015", "889_2015_000003", "001_000002", "TGR", "11.08.2016", "", "", ""],
  ["01.2016", "07.2016", "889_2016_000004", "001_000003", "TGR", "01.09.2016", "889_2016_000005", "TGR", "01.09.2016"],
];

const TaxWindow = () => (
  <MdiWindow x={568} y={20} width={511}>
    <EmployeeForm active="&Steuern" locked>
      <TabInner>
        <Group>
          <Pair>
            <div>
              <FormRow label="Sozialversicherungsnr." width={72}>
                {(id) => (
                  <>
                    <Field id={id} $w={147} defaultValue="1980110333565" />
                    <IconButton $soft aria-label="Hinweis">
                      <AlertIcon />
                    </IconButton>
                  </>
                )}
              </FormRow>
              <FormRow label="Datum DEMMAT" width={72}>
                {(id) => <DateField id={id} tone="grey" flat />}
              </FormRow>
              <FormRow label="Nr. Steuerkarte" width={72}>
                {(id) => (
                  <>
                    <IconButton $soft aria-label="Karte">
                      <CardIcon />
                    </IconButton>
                    <Field id={id} $w={147} $tone="blue" defaultValue="D00000123456-2015-E00014568-444-N001" />
                  </>
                )}
              </FormRow>
              <FormRow label="Typ Steuerkarte" width={72}>
                {(id) => <Dropdown id={id} w={164} value="Initialkarte" flat />}
              </FormRow>
              <FormRow label="Steuerklasse" width={72}>
                {(id) => <Dropdown id={id} w={58} value="2" flat />}
              </FormRow>
              <FormRow label="Steuersatz" width={72}>
                {(id) => (
                  <>
                    <Field id={id} $w={58} $tone="blue" $right $dim defaultValue="0,00" />
                    <span>%</span>
                  </>
                )}
              </FormRow>
            </div>
            <div>
              <FormRow label="Sozialversicherungsnr. Partner" width={93}>
                {(id) => (
                  <>
                    <Field id={id} $w={118} />
                    <IconButton $soft aria-label="Hinweis Partner">
                      <AlertIcon />
                    </IconButton>
                  </>
                )}
              </FormRow>
              <FormRow label="Zähltage Ausland" width={93}>
                {(id) => <Field id={id} $w={58} $right defaultValue="20" />}
              </FormRow>
              <FormRow label="Prozentsatz Ausland" width={93}>
                {(id) => (
                  <>
                    <Field id={id} $w={58} $tone="blue" $right defaultValue="0,00" />
                    <span>%</span>
                  </>
                )}
              </FormRow>
              <Row>
                <TickBar label="Steuertage Ausland anhand der Zähltage Ausland ermitteln" />
              </Row>
              <Row>
                <TickBar label="Steuern pro Tag" />
              </Row>
              <FormRow label="Steuertage fix" width={93} tight>
                {(id) => <Field id={id} $w={58} $tone="blue" $right $dim defaultValue="0" />}
              </FormRow>
            </div>
          </Pair>
        </Group>
        <AllowanceGroup>
          <GroupTitle>Freibeträge und Steuerkredite</GroupTitle>
          <Pair>
            <div>
              {allowances.map(([label, value]) => (
                <FormRow key={label} label={label} width={189}>
                  {(id) => <Field id={id} $w={47} $tone="blue" $right defaultValue={value} />}
                </FormRow>
              ))}
            </div>
            <div>
              <Row>
                <TickBar label="Steuerkredit Arbeitnehmer (CIS)" checked />
              </Row>
              <Row>
                <TickBar label="Steuerkredit für Alleinerziehende (CIM)" />
              </Row>
            </div>
          </Pair>
        </AllowanceGroup>
        <Splitter />
        <Group>
          <GroupTitle>Lohnbescheinigungen (XML)</GroupTitle>
          <Pair>
            <div>
              <FormRow label="Datum Anfrage Steuerkarte" width={99}>
                {(id) => <DateField id={id} tone="grey" flat />}
              </FormRow>
              <Row $label={99}>
                <i />
                <Swatch />
                <span>Gelöscht</span>
              </Row>
            </div>
            <div>
              <FormRow label="Datum Rückgabe Steuerbüro" width={171}>
                {(id) => <DateField id={id} tone="grey" flat />}
              </FormRow>
              <FormRow label="Datum Rückgabe Arbeitnehmer" width={171}>
                {(id) => <DateField id={id} tone="grey" flat />}
              </FormRow>
            </div>
          </Pair>
          <GridBox $h={55} $gap>
            <Grid>
              <colgroup>
                {[9, 37, 37, 58, 58, 49, 72, 58, 49].map((w, i) => (
                  <col key={i} width={w} />
                ))}
                <col />
              </colgroup>
              <thead>
                <tr>
                  <th>
                    <CornerIcon />
                  </th>
                  {certHeads.map((h) => (
                    <th key={h}>{h}</th>
                  ))}
                </tr>
              </thead>
              <tbody>
                {certs.map((cells, i) => (
                  <BodyRow key={cells[0]} $bg={i === 1 ? "#bccbea" : "#ffb3be"}>
                    <td>{i === 0 && <Caret dir="right" color="#111" size={5} />}</td>
                    {cells.map((cell, c) => (
                      <td key={c}>{cell}</td>
                    ))}
                  </BodyRow>
                ))}
              </tbody>
            </Grid>
            <VScroll $top={12} $bottom={9}>
              <Caret dir="up" size={5} />
              <VThumb />
              <Caret size={5} />
            </VScroll>
            <CertFoot>
              <HScroll>
                <Caret dir="left" size={5} />
                <HThumb $w={410} />
                <Caret dir="right" size={5} />
                <i />
                <i />
              </HScroll>
            </CertFoot>
          </GridBox>
        </Group>
      </TabInner>
    </EmployeeForm>
  </MdiWindow>
);

// ---------- ribbon ----------
const ShortcutItems = styled(RibbonItems)`
  align-items: center;
  justify-content: center;
`;

const Big = ({ icon, text, width, menu }) => (
  <BigButton $width={width}>
    {icon}
    <span>{text}</span>
    {menu && <Caret />}
  </BigButton>
);

const Ribbon = () => (
  <>
    <RibbonTabs>
      <FileButton aria-label="Menü">
        <MenuIcon />
        <Caret color="#7a5b1a" />
      </FileButton>
      <RibbonTab $active>Erfassungen</RibbonTab>
      <RibbonTab>Ausdrucke</RibbonTab>
      <RibbonTab>Verschiedenes</RibbonTab>
      <RibbonTab>Anwendung</RibbonTab>
      <Spacer />
      <RibbonTab aria-label="Menüband minimieren">
        <Svg w={5} box={10}>
          <path d="M1 6l4-4 4 4v2H1z" fill="#fff" stroke="#5a687c" strokeWidth="1.5" />
        </Svg>
      </RibbonTab>
    </RibbonTabs>
    <RibbonBar>
      <RibbonGroup $width={217}>
        <RibbonItems>
          <Big icon={<WorkerIcon />} text="Arbeitnehmer" width={50} />
          <Big icon={<ListIcon />} text="Lohnarten" width={40} />
          <Big icon={<StampIcon />} text="Funktionen" width={40} />
          <Big icon={<MonthlyIcon />} text={"Monatliche\nParameter"} width={41} />
          <Big icon={<ToolsIcon />} text="Parameter" width={40} menu />
        </RibbonItems>
        <RibbonCaption>Stammdaten</RibbonCaption>
      </RibbonGroup>
      <RibbonGroup $width={292}>
        <RibbonItems>
          <Big icon={<WagesIcon />} text="Löhne" width={44} />
          <Big icon={<MedalIcon />} text="Gratifikationen" width={44} />
          <Big icon={<SlidersIcon />} text="Simulationen" width={62} />
          <SmallList>
            <PlainButton>
              <SeizeIcon />
              Lohnpfändungen
            </PlainButton>
            <PlainButton>
              <LeaveWorkIcon />
              Abgangsentschädigungen
            </PlainButton>
            <PlainButton>
              <BonusIcon />
              Prämien
            </PlainButton>
          </SmallList>
          <Big icon={<MoneyIcon />} text="Überweisungen" width={45} menu />
        </RibbonItems>
        <RibbonCaption>Erfassung</RibbonCaption>
      </RibbonGroup>
      <RibbonGroup $width={86}>
        <RibbonItems>
          <Big icon={<PostingsIcon />} text="Verrichtungen" width={48} />
          <Big icon={<LeaveIcon />} text={"Urlaub\npro Monat"} width={32} />
        </RibbonItems>
        <RibbonCaption>
          <span>Konsultierung</span>
          <LauncherIcon />
        </RibbonCaption>
      </RibbonGroup>
      <RibbonGroup $width={78}>
        <ShortcutItems>Controls with shortcuts</ShortcutItems>
        <RibbonCaption>
          <span>Internal use only</span>
          <LauncherIcon />
        </RibbonCaption>
      </RibbonGroup>
    </RibbonBar>
  </>
);

function App() {
  return (
    <Page>
      <GlobalStyle />
      <Shell>
        <AppTitle>
          <Logo />
          <div>
            Arbeitnehmer <span>- Pay-in</span>
          </div>
          <AppTitleButtons>
            <PlainButton aria-label="Minimieren">
              <MinGlyph />
            </PlainButton>
            <PlainButton aria-label="Wiederherstellen">
              <RestoreGlyph />
            </PlainButton>
            <PlainButton aria-label="Schließen">
              <CloseGlyph />
            </PlainButton>
          </AppTitleButtons>
        </AppTitle>
        <Ribbon />
        <Desktop>
          <EmployeeList />
          <ContractWindow />
          <TaxWindow />
        </Desktop>
        <StatusBar>
          <StatusItem>SERVER-SQLLU\TEST2008R2</StatusItem>
          <StatusItem>
            <HouseIcon />
            Demo TGR (889)
          </StatusItem>
          <StatusItem>
            <UserIcon />
            PTH
          </StatusItem>
          <StatusItem>
            <KeyIcon />
          </StatusItem>
          <StatusItem>
            <DayIcon />
            22.06.2017
          </StatusItem>
          <StatusItem>Periode:</StatusItem>
          <StatusItem>01.2016</StatusItem>
        </StatusBar>
      </Shell>
    </Page>
  );
}

export default App;
